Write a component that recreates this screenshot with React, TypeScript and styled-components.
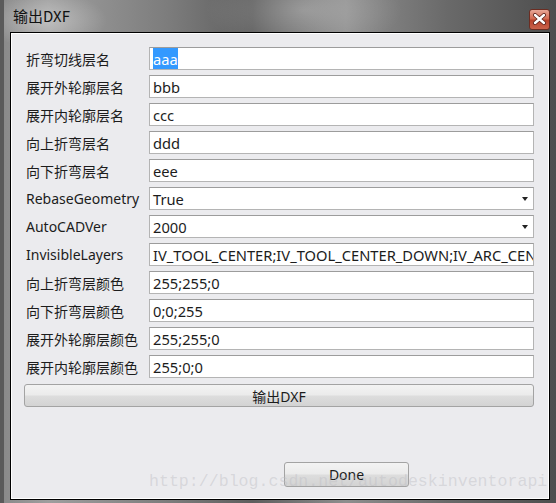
import React from "react";
import styled, { createGlobalStyle } from "styled-components";

const Global = createGlobalStyle`
  html, body { margin: 0; padding: 0; background: #5a5a5a; }
  body { width: 556px; height: 503px; overflow: hidden; }
`;

const Frame = styled.div`
  position: relative;
  width: 556px;
  height: 503px;
  box-sizing: border-box;
  display: flex;
  flex-direction: column;
  padding: 0 6px 3px 6px;
  background:
    radial-gradient(ellipse 90px 40px at 40px 20px, rgba(255,255,255,0.35), transparent 70%),
    radial-gradient(ellipse 140px 60px at 300px 10px, rgba(255,255,255,0.25), transparent 70%),
    linear-gradient(90deg, #8a8a8a 0%, #9e9e9e 8%, #7c7c7c 30%, #5e5e5e 45%, #8e8e8e 62%, #6a6a6a 80%, #4e4e4e 100%);
  border-left: 4px solid #5a5a5a;
  font-family: "Noto Sans", "Noto Sans CJK SC", sans-serif;
`;

const TitleBar = styled.div`
  height: 32px;
  display: flex;
  align-items: center;
  justify-content: space-between;
  margin-left: -6px;
  padding-left: 9px;
  box-sizing: border-box;
`;

const Title = styled.span`
  font-family: "Noto Sans CJK SC", "Noto Sans", sans-serif;
  font-size: 15px;
  color: #111;
  margin-top: -2px;
`;

const CloseBtn = styled.div`
  width: 19px;
  height: 19px;
  margin-top: 6px;
  border-radius: 3px;
  border: 1px solid #6b2d22;
  background: linear-gradient(180deg, #e8a898 0%, #d26a52 45%, #b8432c 55%, #c9624a 100%);
  display: flex;
  align-items: center;
  justify-content: center;
`;

const Client = styled.div`
  flex: 1;
  border: 1px solid #000;
  box-shadow: inset 0 0 0 1px #ffffff;
  background: #ebebee;
  padding: 14px 15px 0 14px;
  display: flex;
  flex-direction: column;
  box-sizing: border-box;
`;

const Form = styled.div`
  display: grid;
  grid-template-columns: 124px 1fr;
  grid-auto-rows: 23px;
  row-gap: 5px;
`;

const Label = styled.div`
  display: flex;
  align-items: center;
  font-size: 14px;
  color: #1c1c1c;
  white-space: nowrap;
  padding-left: 1px;
`;

const Field = styled.div`
  position: relative;
  background: #fff;
  border: 1px solid #b4b4b4;
  border-top-color: #9c9c9c;
  display: flex;
  align-items: center;
  padding-left: 3px;
  overflow: hidden;
  font-size: 14.7px;
  color: #1c1c1c;
  white-space: nowrap;
`;

const Selected = styled.span`
  background: #3399ff;
  color: #fff;
  padding: 1px 0;
`;

const Arrow = styled.span`
  position: absolute;
  right: 5px;
  top: 9px;
  width: 0;
  height: 0;
  border-left: 3px solid transparent;
  border-right: 3px solid transparent;
  border-top: 4px solid #222;
`;

const WideButton = styled.div`
  margin-top: 6px;
  margin-left: -1px;
  height: 23px;
  box-sizing: border-box;
  border: 1px solid #a3a3a3;
  border-radius: 3px;
  background: linear-gradient(180deg, #f3f3f3 0%, #ebebeb 48%, #dddddd 52%, #d3d3d3 100%);
  display: flex;
  align-items: center;
  justify-content: center;
  font-size: 14px;
  color: #1c1c1c;
`;

const Footer = styled.div`
  flex: 1;
  display: flex;
  align-items: flex-end;
  justify-content: flex-start;
  padding-bottom: 12px;
`;

const DoneButton = styled(WideButton)`
  margin: 0 0 0 259px;
  width: 125px;
  height: 25px;
`;

const Watermark = styled.div`
  position: absolute;
  left: 145px;
  top: 472px;
  font-family: "Liberation Mono", monospace;
  font-size: 16.6px;
  color: rgba(190, 190, 196, 0.45);
  pointer-events: none;
  white-space: nowrap;
`;

type Row = { label: string; value: string; select?: boolean; selected?: boolean };

const rows: Row[] = [
  { label: "折弯切线层名", value: "aaa", selected: true },
  { label: "展开外轮廓层名", value: "bbb" },
  { label: "展开内轮廓层名", value: "ccc" },
  { label: "向上折弯层名", value: "ddd" },
  { label: "向下折弯层名", value: "eee" },
  { label: "RebaseGeometry", value: "True", select: true },
  { label: "AutoCADVer", value: "2000", select: true },
  { label: "InvisibleLayers", value: "IV_TOOL_CENTER;IV_TOOL_CENTER_DOWN;IV_ARC_CENTERS;IV_TANGENT" },
  { label: "向上折弯层颜色", value: "255;255;0" },
  { label: "向下折弯层颜色", value: "0;0;255" },
  { label: "展开外轮廓层颜色", value: "255;255;0" },
  { label: "展开内轮廓层颜色", value: "255;0;0" },
];

export default function App() {
  return (
    <>
      <Global />
      <Frame>
        <TitleBar>
          <Title>输出DXF</Title>
          <CloseBtn>
            <svg width="13" height="12" viewBox="0 0 13 12">
              <path d="M2 2 L11 10 M11 2 L2 10" stroke="#5a2018" strokeWidth="4" strokeLinecap="round" />
              <path d="M2 2 L11 10 M11 2 L2 10" stroke="#ffffff" strokeWidth="2.4" strokeLinecap="round" />
            </svg>
          </CloseBtn>
        </TitleBar>
        <Client>
          <Form>
            {rows.map((r) => (
              <React.Fragment key={r.label}>
                <Label>{r.label}</Label>
                <Field>
                  {r.selected ? <Selected>{r.value}</Selected> : r.value}
                  {r.select && <Arrow />}
                </Field>
              </React.Fragment>
            ))}
          </Form>
          <WideButton>输出DXF</WideButton>
          <Footer>
            <DoneButton>Done</DoneButton>
          </Footer>
        </Client>
        <Watermark>http://blog.csdn.net/autodeskinventorapi</Watermark>
      </Frame>
    </>
  );
}
